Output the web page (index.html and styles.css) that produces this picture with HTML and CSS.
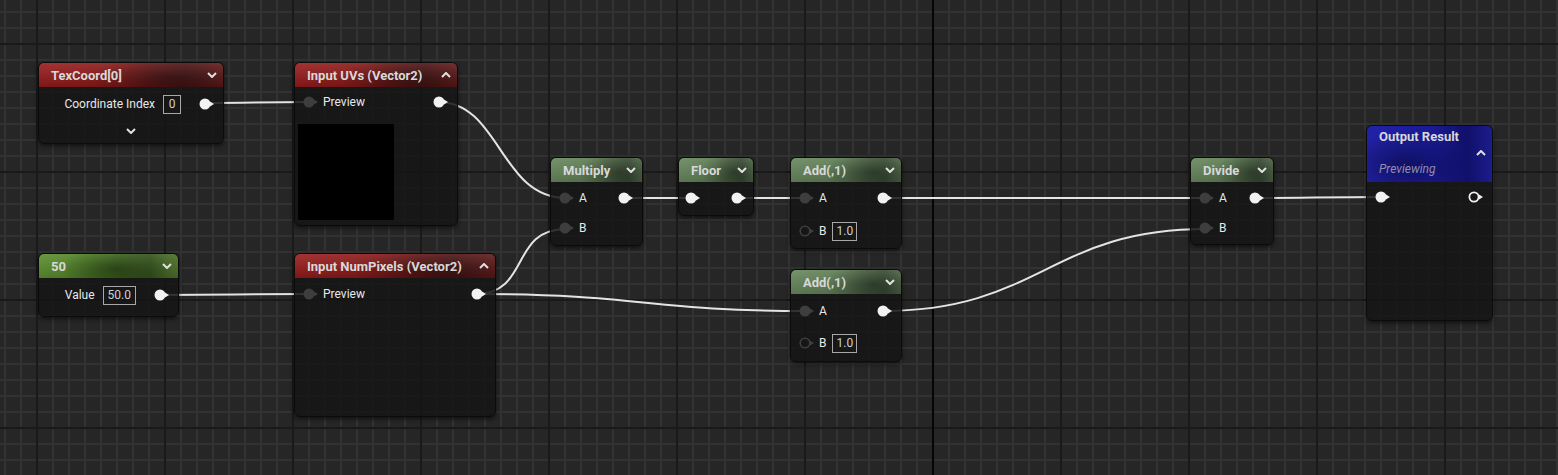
FILE: index.html
```html
<!DOCTYPE html>
<html lang="en">
<head>
    <meta charset="UTF-8">
    <title>Material Graph</title>
    <link rel="stylesheet" href="styles.css">
</head>
<body>
<div class="graph">
    <svg class="wires" width="1558" height="475" viewBox="0 0 1558 475">
        <path d="M205 103 C250 103, 260 102, 310 102"/>
        <path d="M438 102 C500 102, 500 198, 566 198"/>
        <path d="M625 198 L691 198"/>
        <path d="M737 198 L806 198"/>
        <path d="M882 198 L1206 198"/>
        <path d="M1256 198 C1300 198, 1330 197, 1382 197"/>
        <path d="M160 295 C220 295, 250 294, 310 294"/>
        <path d="M476 294 C530 294, 510 229, 566 229"/>
        <path d="M476 294 C640 294, 650 311, 806 311"/>
        <path d="M882 311 C1040 311, 1050 229, 1206 229"/>
    </svg>

    <!-- TexCoord -->
    <div class="node n-tex">
        <div class="head red">
            <span>TexCoord[0]</span>
            <svg class="chev" viewBox="0 0 10 6"><path d="M1 1 L5 5 L9 1"/></svg>
        </div>
        <div class="body pad2">
            <div class="row">
                <span class="right">Coordinate Index</span>
                <span class="box">0</span>
                <svg class="pin out on" viewBox="0 0 16 12"><circle cx="6" cy="6" r="5.5"/><path d="M11 3.5 L15 6 L11 8.5Z"/></svg>
            </div>
            <div class="more">
                <svg class="chev" viewBox="0 0 10 6"><path d="M1 1 L5 5 L9 1"/></svg>
            </div>
        </div>
    </div>

    <!-- Input UVs -->
    <div class="node n-uvs">
        <div class="head red">
            <span>Input UVs (Vector2)</span>
            <svg class="chev" viewBox="0 0 10 6"><path d="M1 5 L5 1 L9 5"/></svg>
        </div>
        <div class="body">
            <div class="row">
                <svg class="pin off" viewBox="0 0 16 12"><circle cx="6" cy="6" r="5.5"/><path d="M11 3.5 L15 6 L11 8.5Z"/></svg>
                <span>Preview</span>
                <svg class="pin out on" viewBox="0 0 16 12"><circle cx="6" cy="6" r="5.5"/><path d="M11 3.5 L15 6 L11 8.5Z"/></svg>
            </div>
            <div class="preview"></div>
        </div>
    </div>

    <!-- Multiply -->
    <div class="node n-mul">
        <div class="head green">
            <span>Multiply</span>
            <svg class="chev" viewBox="0 0 10 6"><path d="M1 1 L5 5 L9 1"/></svg>
        </div>
        <div class="body pad1">
            <div class="row">
                <svg class="pin off" viewBox="0 0 16 12"><circle cx="6" cy="6" r="5.5"/><path d="M11 3.5 L15 6 L11 8.5Z"/></svg>
                <span>A</span>
                <svg class="pin out on" viewBox="0 0 16 12"><circle cx="6" cy="6" r="5.5"/><path d="M11 3.5 L15 6 L11 8.5Z"/></svg>
            </div>
            <div class="row">
                <svg class="pin off" viewBox="0 0 16 12"><circle cx="6" cy="6" r="5.5"/><path d="M11 3.5 L15 6 L11 8.5Z"/></svg>
                <span>B</span>
            </div>
        </div>
    </div>

    <!-- Floor -->
    <div class="node n-floor">
        <div class="head green">
            <span>Floor</span>
            <svg class="chev" viewBox="0 0 10 6"><path d="M1 1 L5 5 L9 1"/></svg>
        </div>
        <div class="body pad1">
            <div class="row tight">
                <svg class="pin on" viewBox="0 0 16 12"><circle cx="6" cy="6" r="5.5"/><path d="M11 3.5 L15 6 L11 8.5Z"/></svg>
                <svg class="pin out on" viewBox="0 0 16 12"><circle cx="6" cy="6" r="5.5"/><path d="M11 3.5 L15 6 L11 8.5Z"/></svg>
            </div>
        </div>
    </div>

    <!-- Add 1 -->
    <div class="node n-add1">
        <div class="head green">
            <span>Add(,1)</span>
            <svg class="chev" viewBox="0 0 10 6"><path d="M1 1 L5 5 L9 1"/></svg>
        </div>
        <div class="body pad1 gap3">
            <div class="row">
                <svg class="pin off" viewBox="0 0 16 12"><circle cx="6" cy="6" r="5.5"/><path d="M11 3.5 L15 6 L11 8.5Z"/></svg>
                <span>A</span>
                <svg class="pin out on" viewBox="0 0 16 12"><circle cx="6" cy="6" r="5.5"/><path d="M11 3.5 L15 6 L11 8.5Z"/></svg>
            </div>
            <div class="row">
                <svg class="pin hollow" viewBox="0 0 16 12"><circle cx="6" cy="6" r="4.8"/><path d="M11 3.5 L15 6 L11 8.5Z"/></svg>
                <span>B</span>
                <span class="box">1.0</span>
            </div>
        </div>
    </div>

    <!-- Add 2 -->
    <div class="node n-add2">
        <div class="head green">
            <span>Add(,1)</span>
            <svg class="chev" viewBox="0 0 10 6"><path d="M1 1 L5 5 L9 1"/></svg>
        </div>
        <div class="body pad2 gap2">
            <div class="row">
                <svg class="pin off" viewBox="0 0 16 12"><circle cx="6" cy="6" r="5.5"/><path d="M11 3.5 L15 6 L11 8.5Z"/></svg>
                <span>A</span>
                <svg class="pin out on" viewBox="0 0 16 12"><circle cx="6" cy="6" r="5.5"/><path d="M11 3.5 L15 6 L11 8.5Z"/></svg>
            </div>
            <div class="row">
                <svg class="pin hollow" viewBox="0 0 16 12"><circle cx="6" cy="6" r="4.8"/><path d="M11 3.5 L15 6 L11 8.5Z"/></svg>
                <span>B</span>
                <span class="box">1.0</span>
            </div>
        </div>
    </div>

    <!-- Divide -->
    <div class="node n-div">
        <div class="head green">
            <span>Divide</span>
            <svg class="chev" viewBox="0 0 10 6"><path d="M1 1 L5 5 L9 1"/></svg>
        </div>
        <div class="body pad1">
            <div class="row">
                <svg class="pin off" viewBox="0 0 16 12"><circle cx="6" cy="6" r="5.5"/><path d="M11 3.5 L15 6 L11 8.5Z"/></svg>
                <span>A</span>
                <svg class="pin out on" viewBox="0 0 16 12"><circle cx="6" cy="6" r="5.5"/><path d="M11 3.5 L15 6 L11 8.5Z"/></svg>
            </div>
            <div class="row">
                <svg class="pin off" viewBox="0 0 16 12"><circle cx="6" cy="6" r="5.5"/><path d="M11 3.5 L15 6 L11 8.5Z"/></svg>
                <span>B</span>
            </div>
        </div>
    </div>

    <!-- Output Result -->
    <div class="node n-out">
        <div class="head-tall blue">
            <span class="title">Output Result</span>
            <span class="chev-row">
                <svg class="chev" viewBox="0 0 10 6"><path d="M1 5 L5 1 L9 5"/></svg>
            </span>
            <span class="sub">Previewing</span>
        </div>
        <div class="body">
            <div class="row">
                <svg class="pin on" viewBox="0 0 16 12"><circle cx="6" cy="6" r="5.5"/><path d="M11 3.5 L15 6 L11 8.5Z"/></svg>
                <svg class="pin out ring" viewBox="0 0 16 12"><circle cx="6" cy="6" r="4.6"/><path d="M11 3.5 L15 6 L11 8.5Z"/></svg>
            </div>
        </div>
    </div>

    <!-- Constant 50 -->
    <div class="node n-50">
        <div class="head lime">
            <span>50</span>
            <svg class="chev" viewBox="0 0 10 6"><path d="M1 1 L5 5 L9 1"/></svg>
        </div>
        <div class="body pad2">
            <div class="row">
                <span class="right">Value</span>
                <span class="box wide">50.0</span>
                <svg class="pin out on" viewBox="0 0 16 12"><circle cx="6" cy="6" r="5.5"/><path d="M11 3.5 L15 6 L11 8.5Z"/></svg>
            </div>
        </div>
    </div>

    <!-- Input NumPixels -->
    <div class="node n-num">
        <div class="head red">
            <span>Input NumPixels (Vector2)</span>
            <svg class="chev" viewBox="0 0 10 6"><path d="M1 5 L5 1 L9 5"/></svg>
        </div>
        <div class="body pad1">
            <div class="row">
                <svg class="pin off" viewBox="0 0 16 12"><circle cx="6" cy="6" r="5.5"/><path d="M11 3.5 L15 6 L11 8.5Z"/></svg>
                <span>Preview</span>
                <svg class="pin out on" viewBox="0 0 16 12"><circle cx="6" cy="6" r="5.5"/><path d="M11 3.5 L15 6 L11 8.5Z"/></svg>
            </div>
        </div>
    </div>
</div>
</body>
</html>
```

FILE: styles.css
```css
body {
    margin: 0;
    background: #262626;
    font-family: Roboto, "Noto Sans", sans-serif;
    overflow: hidden;
}
.graph {
    position: relative;
    width: 1558px;
    height: 475px;
    overflow: hidden;
    background-color: #262626;
    background-image:
        linear-gradient(to right, transparent 932px, #050505 932px, #050505 934px, transparent 934px),
        linear-gradient(to right, #1a1a1a 2px, transparent 2px),
        linear-gradient(to bottom, #1a1a1a 2px, transparent 2px),
        linear-gradient(to right, #323232 2px, transparent 2px),
        linear-gradient(to bottom, #323232 2px, transparent 2px);
    background-size: 100% 100%, 128px 128px, 128px 128px, 16px 16px, 16px 16px;
    background-position: 0 0, 36px 0, 0 43px, 4px 0, 0 11px;
}
.wires {
    position: absolute;
    left: 0;
    top: 0;
}
.wires path {
    fill: none;
    stroke: #e4e4e4;
    stroke-width: 2;
}

/* nodes */
.node {
    position: absolute;
    box-sizing: border-box;
    display: flex;
    flex-direction: column;
    border: 1px solid #0b0b0b;
    border-radius: 6px;
    overflow: hidden;
    background: rgba(20, 21, 20, 0.86);
    box-shadow: 0 2px 4px rgba(0, 0, 0, 0.55);
    font-size: 12px;
    color: #e8e8e8;
}
.n-tex { left: 38px; top: 62px; width: 186px; height: 82px; }
.n-uvs { left: 294px; top: 62px; width: 164px; height: 164px; }
.n-mul { left: 550px; top: 157px; width: 93px; height: 89px; }
.n-floor { left: 678px; top: 157px; width: 76px; height: 59px; }
.n-add1 { left: 790px; top: 157px; width: 112px; height: 92px; }
.n-add2 { left: 790px; top: 269px; width: 112px; height: 93px; }
.n-div { left: 1190px; top: 157px; width: 84px; height: 88px; }
.n-out { left: 1366px; top: 125px; width: 127px; height: 196px; }
.n-50 { left: 38px; top: 253px; width: 141px; height: 64px; }
.n-num { left: 294px; top: 253px; width: 202px; height: 164px; }

.head {
    flex: none;
    height: 24px;
    display: flex;
    align-items: center;
    justify-content: space-between;
    padding: 0 6px 0 12px;
    font-size: 13px;
    font-weight: bold;
    color: #d8d8d8;
}
.head-tall {
    flex: none;
    height: 56px;
    box-sizing: border-box;
    display: flex;
    flex-direction: column;
    padding: 2px 6px 0 12px;
    font-size: 13px;
    font-weight: bold;
    color: #d8d8d8;
}
.head-tall .title { line-height: 18px; }
.head-tall .chev-row {
    display: flex;
    justify-content: flex-end;
    height: 14px;
    align-items: center;
}
.head-tall .sub {
    line-height: 18px;
    font-size: 12px;
    font-weight: normal;
    font-style: italic;
    color: #8e8eae;
}

.red {
    background:
        linear-gradient(to bottom, rgba(255, 255, 255, 0.1), rgba(0, 0, 0, 0.18)),
        radial-gradient(ellipse 45% 90% at 72% 60%, rgba(20, 5, 5, 0.55), transparent),
        linear-gradient(to right, #9a1c1c, #8a1818 45%, #5a1616 80%, #6a1a1a);
}
.green {
    background:
        linear-gradient(to bottom, rgba(255, 255, 255, 0.08), rgba(0, 0, 0, 0.15)),
        radial-gradient(ellipse 45% 90% at 75% 60%, rgba(10, 20, 10, 0.5), transparent),
        linear-gradient(to right, #6a8a5f, #5f7d55 50%, #465a3f 85%, #55704c);
}
.lime {
    background:
        linear-gradient(to bottom, rgba(255, 255, 255, 0.08), rgba(0, 0, 0, 0.15)),
        radial-gradient(ellipse 40% 90% at 55% 60%, rgba(10, 25, 5, 0.55), transparent),
        linear-gradient(to right, #5e9030, #4e7e24 50%, #3a5a1e 80%, #4c7028);
}
.blue {
    background:
        radial-gradient(ellipse 50% 60% at 30% 70%, rgba(5, 5, 50, 0.55), transparent),
        linear-gradient(to right, #2222a8, #1a1a96 50%, #10106a 80%, #1c1c8c);
}
.chev {
    width: 10px;
    height: 6px;
    fill: none;
    stroke: #e0e0e0;
    stroke-width: 2;
}

.body {
    display: flex;
    flex-direction: column;
    flex: 1;
}
.pad1 { padding-top: 1px; }
.pad2 { padding-top: 2px; }
.gap2 { gap: 2px; }
.gap3 { gap: 3px; }
.row {
    height: 30px;
    flex: none;
    display: flex;
    align-items: center;
    gap: 4px;
    padding: 0 8px 0 8px;
}
.row.tight { padding: 0 6px; }
.right { margin-left: auto; margin-right: 2px; }
.box {
    box-sizing: border-box;
    height: 19px;
    min-width: 18px;
    padding: 0 3px;
    margin-left: 2px;
    border: 1px solid #a8a8a8;
    display: flex;
    align-items: center;
    justify-content: center;
    color: #d0d0d0;
}
.box.wide { padding: 0 4px; }
.more {
    display: flex;
    justify-content: center;
    align-items: center;
    height: 24px;
}

/* pins */
.pin {
    width: 16px;
    height: 12px;
    flex: none;
}
.pin.out { margin-left: auto; }
.box + .pin.out { margin-left: 14px; }
.pin.on { fill: #f2f2f2; }
.pin.off { fill: #3e3e3e; }
.pin.hollow circle { fill: none; stroke: #3e3e3e; stroke-width: 1.6; }
.pin.hollow path { fill: #3e3e3e; }
.pin.ring circle { fill: none; stroke: #f2f2f2; stroke-width: 1.8; }
.pin.ring path { fill: #f2f2f2; }

.preview {
    width: 96px;
    height: 96px;
    margin: 7px 0 0 3px;
    background: #000;
}
```
